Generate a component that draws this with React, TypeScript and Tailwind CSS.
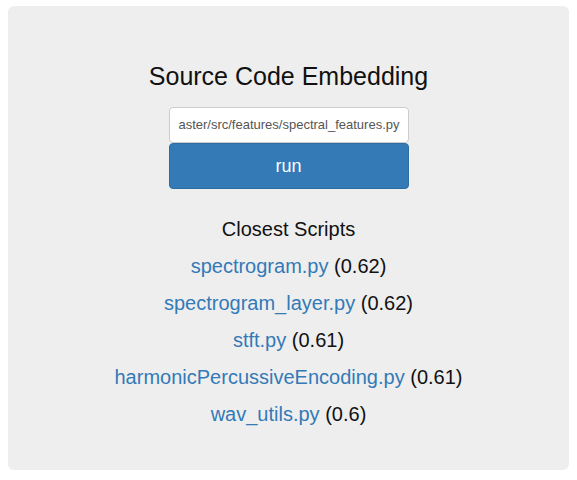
import React from 'react';

const results = [
  { name: 'spectrogram.py', score: '0.62' },
  { name: 'spectrogram_layer.py', score: '0.62' },
  { name: 'stft.py', score: '0.61' },
  { name: 'harmonicPercussiveEncoding.py', score: '0.61' },
  { name: 'wav_utils.py', score: '0.6' },
];

const App: React.FC = () => {
  return (
    <div className="bg-white w-[577px] h-[480px] pt-[6px] px-[8px] font-['Liberation_Sans',Arial,sans-serif] text-[#111111]">
      <div className="bg-[#eeeeee] rounded-[6px] h-[464px] flex flex-col items-center">
        <h1 className="mt-[55px] text-[25px] leading-[30px] font-normal">Source Code Embedding</h1>
        <div className="mt-[16px] w-[240px] flex flex-col">
          <div className="h-[36px] bg-white border border-[#cccccc] rounded-[4px] pl-[8px] pr-[8px] flex items-center">
            <div className="flex-1 flex justify-end overflow-hidden whitespace-nowrap text-[13px] text-[#555555]">
              <span>https://github.com/user/repo/blob/master/src/features/spectral_features.py</span>
            </div>
          </div>
          <button className="h-[46px] bg-[#337ab7] border border-[#2e6da4] rounded-[4px] text-white text-[18px]">
            run
          </button>
        </div>
        <h3 className="mt-[28px] text-[20px] leading-[24px]">Closest Scripts</h3>
        <div className="mt-[13px] flex flex-col items-center gap-[13px]">
          {results.map((r) => (
            <p key={r.name} className="text-[20px] leading-[24px]">
              <a href="#" className="text-[#337ab7]">{r.name}</a> ({r.score})
            </p>
          ))}
        </div>
      </div>
    </div>
  );
};

export default App;
